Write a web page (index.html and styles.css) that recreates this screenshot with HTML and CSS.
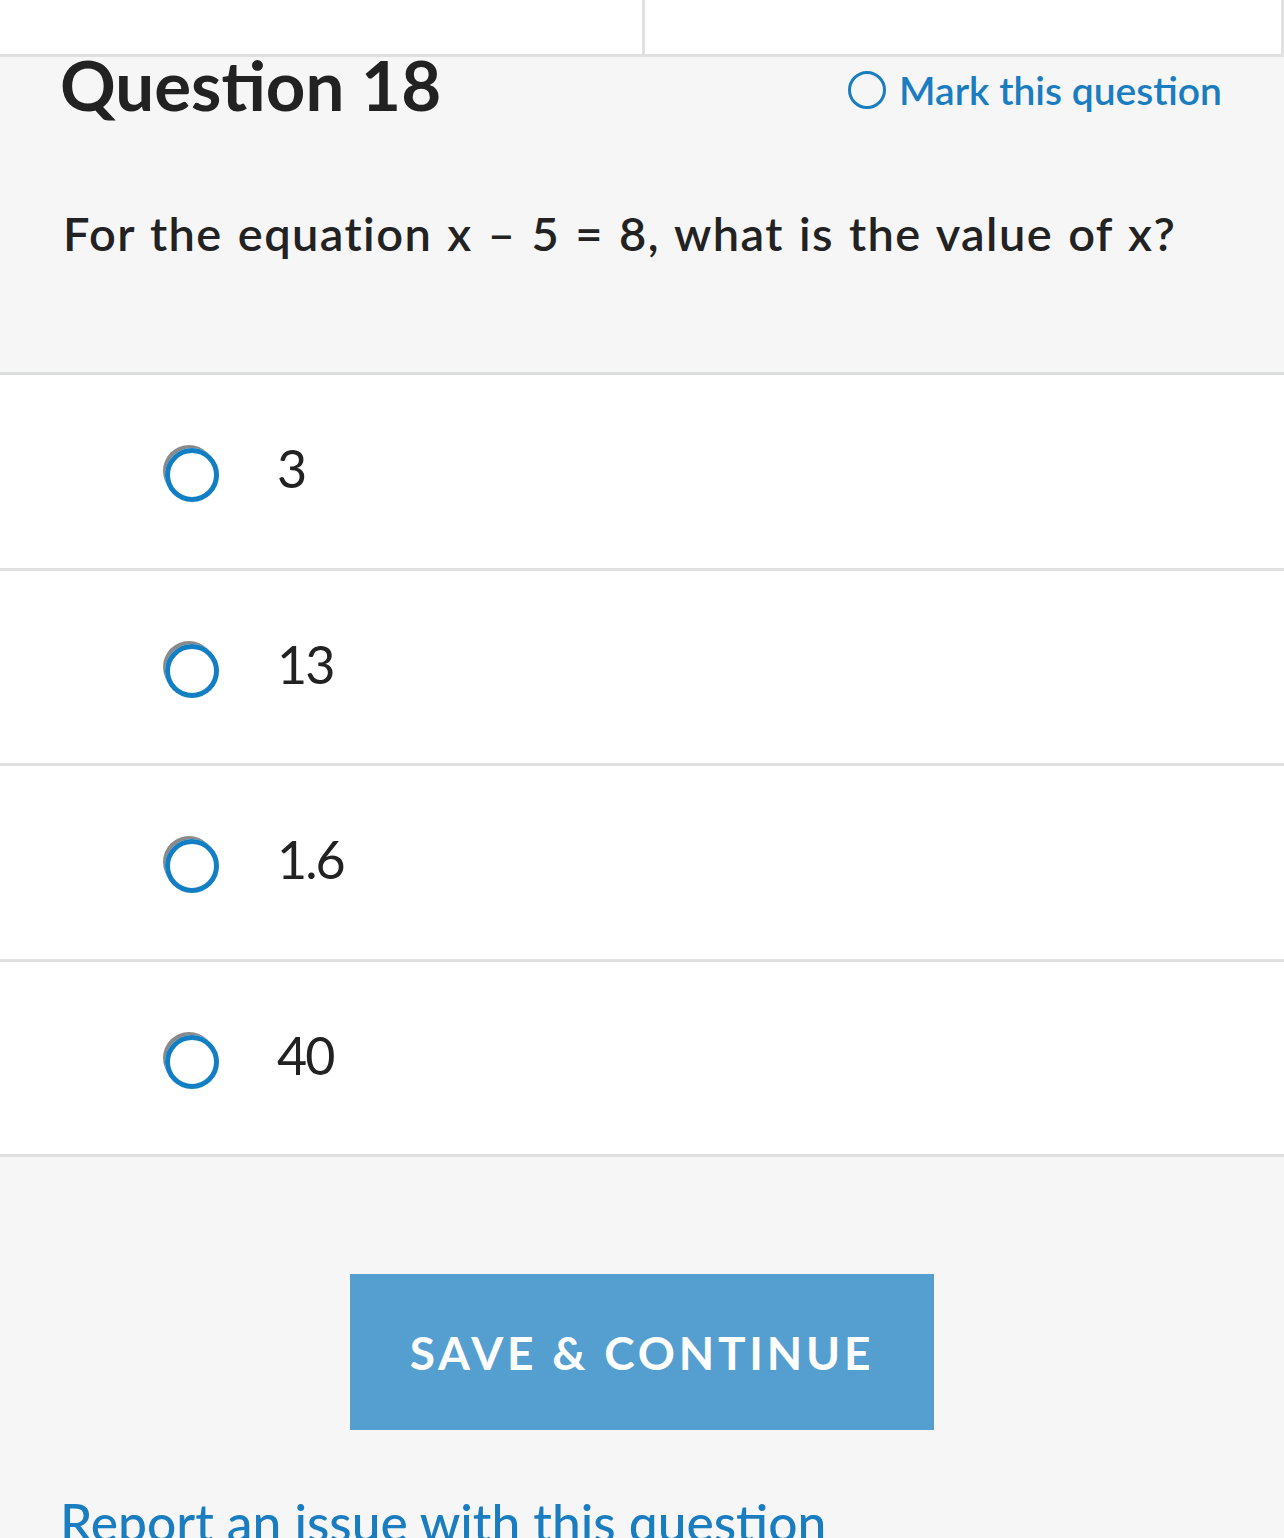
FILE: index.html
```html
<!DOCTYPE html>
<html lang="en">
<head>
<meta charset="utf-8">
<title>Question 18</title>
<link rel="stylesheet" href="styles.css">
</head>
<body>
<div class="topbar">
  <div class="top-cell left"></div>
  <div class="top-cell right"></div>
</div>
<section class="question">
  <div class="question-head">
    <h1 class="title">Question 18</h1>
    <a class="mark" href="#"><span class="mark-circle"></span>Mark this question</a>
  </div>
  <p class="prompt">For the equation x – 5 = 8, what is the value of x?</p>
</section>
<ul class="options">
  <li class="option"><span class="radio"></span><span class="label">3</span></li>
  <li class="option"><span class="radio"></span><span class="label">13</span></li>
  <li class="option"><span class="radio"></span><span class="label">1.6</span></li>
  <li class="option"><span class="radio"></span><span class="label">40</span></li>
</ul>
<footer class="footer">
  <button class="save" type="button">SAVE &amp; CONTINUE</button>
  <a class="report" href="#">Report an issue with this question</a>
</footer>
</body>
</html>
```
FILE: styles.css
```css
html, body {
  margin: 0;
  padding: 0;
  height: 1538px;
  overflow: hidden;
  background: #f6f6f6;
  font-family: "Lato", "Open Sans", sans-serif;
  color: #222;
}

.topbar {
  display: flex;
  height: 54px;
  background: #fff;
  border-bottom: 3px solid #e0e0e0;
}
.top-cell {
  border-right: 3px solid #e0e0e0;
}
.top-cell.left {
  width: 642px;
}
.top-cell.right {
  flex: 1;
}

.question {
  background: #f6f6f6;
  border-bottom: 3px solid #dcdde0;
  height: 318px;
  box-sizing: border-box;
  padding: 0 62px;
}
.question-head {
  display: flex;
  justify-content: space-between;
  align-items: flex-start;
}
.title {
  margin: 0 0 0 -2px;
  font-size: 69px;
  line-height: 56px;
  font-weight: 700;
  color: #222;
  padding-top: 0;
}
.mark {
  display: flex;
  align-items: center;
  gap: 13px;
  margin-top: 11px;
  font-size: 39px;
  line-height: 44px;
  font-weight: 600;
  color: #1a7dc0;
  text-decoration: none;
}
.mark-circle {
  width: 32px;
  height: 32px;
  border: 3px solid #1a7dc0;
  border-radius: 50%;
}
.prompt {
  margin: 92px 0 0 1px;
  font-size: 47px;
  line-height: 56px;
  font-weight: 600;
  letter-spacing: 1.4px;
  word-spacing: 2px;
  color: #222;
}

.options {
  list-style: none;
  margin: 0;
  padding: 0;
  background: #fff;
}
.option {
  display: flex;
  align-items: center;
  height: 192.5px;
  border-bottom: 3px solid #e0e0e0;
  padding-left: 165px;
}
.radio {
  width: 44px;
  height: 44px;
  border: 5px solid #127fc4;
  border-radius: 50%;
  box-shadow: -3px -4px 0 -1px #8a8a8a;
  margin-top: 8px;
}
.label {
  margin-left: 58px;
  margin-top: -6px;
  font-size: 52px;
  font-weight: 400;
  letter-spacing: -2px;
  color: #222;
}

.footer {
  display: flex;
  flex-direction: column;
  align-items: flex-start;
  padding: 117px 0 0 0;
}
.save {
  align-self: center;
  width: 584px;
  height: 156px;
  border: none;
  background: #549fd0;
  color: #fff;
  font-family: "Lato", "Open Sans", sans-serif;
  font-size: 46px;
  font-weight: 700;
  letter-spacing: 3.8px;
  text-indent: 0;
  cursor: pointer;
}
.report {
  margin: 64px 0 0 60px;
  font-size: 51.5px;
  line-height: 56px;
  color: #1a7dc0;
  text-decoration: none;
  font-weight: 500;
}
```
